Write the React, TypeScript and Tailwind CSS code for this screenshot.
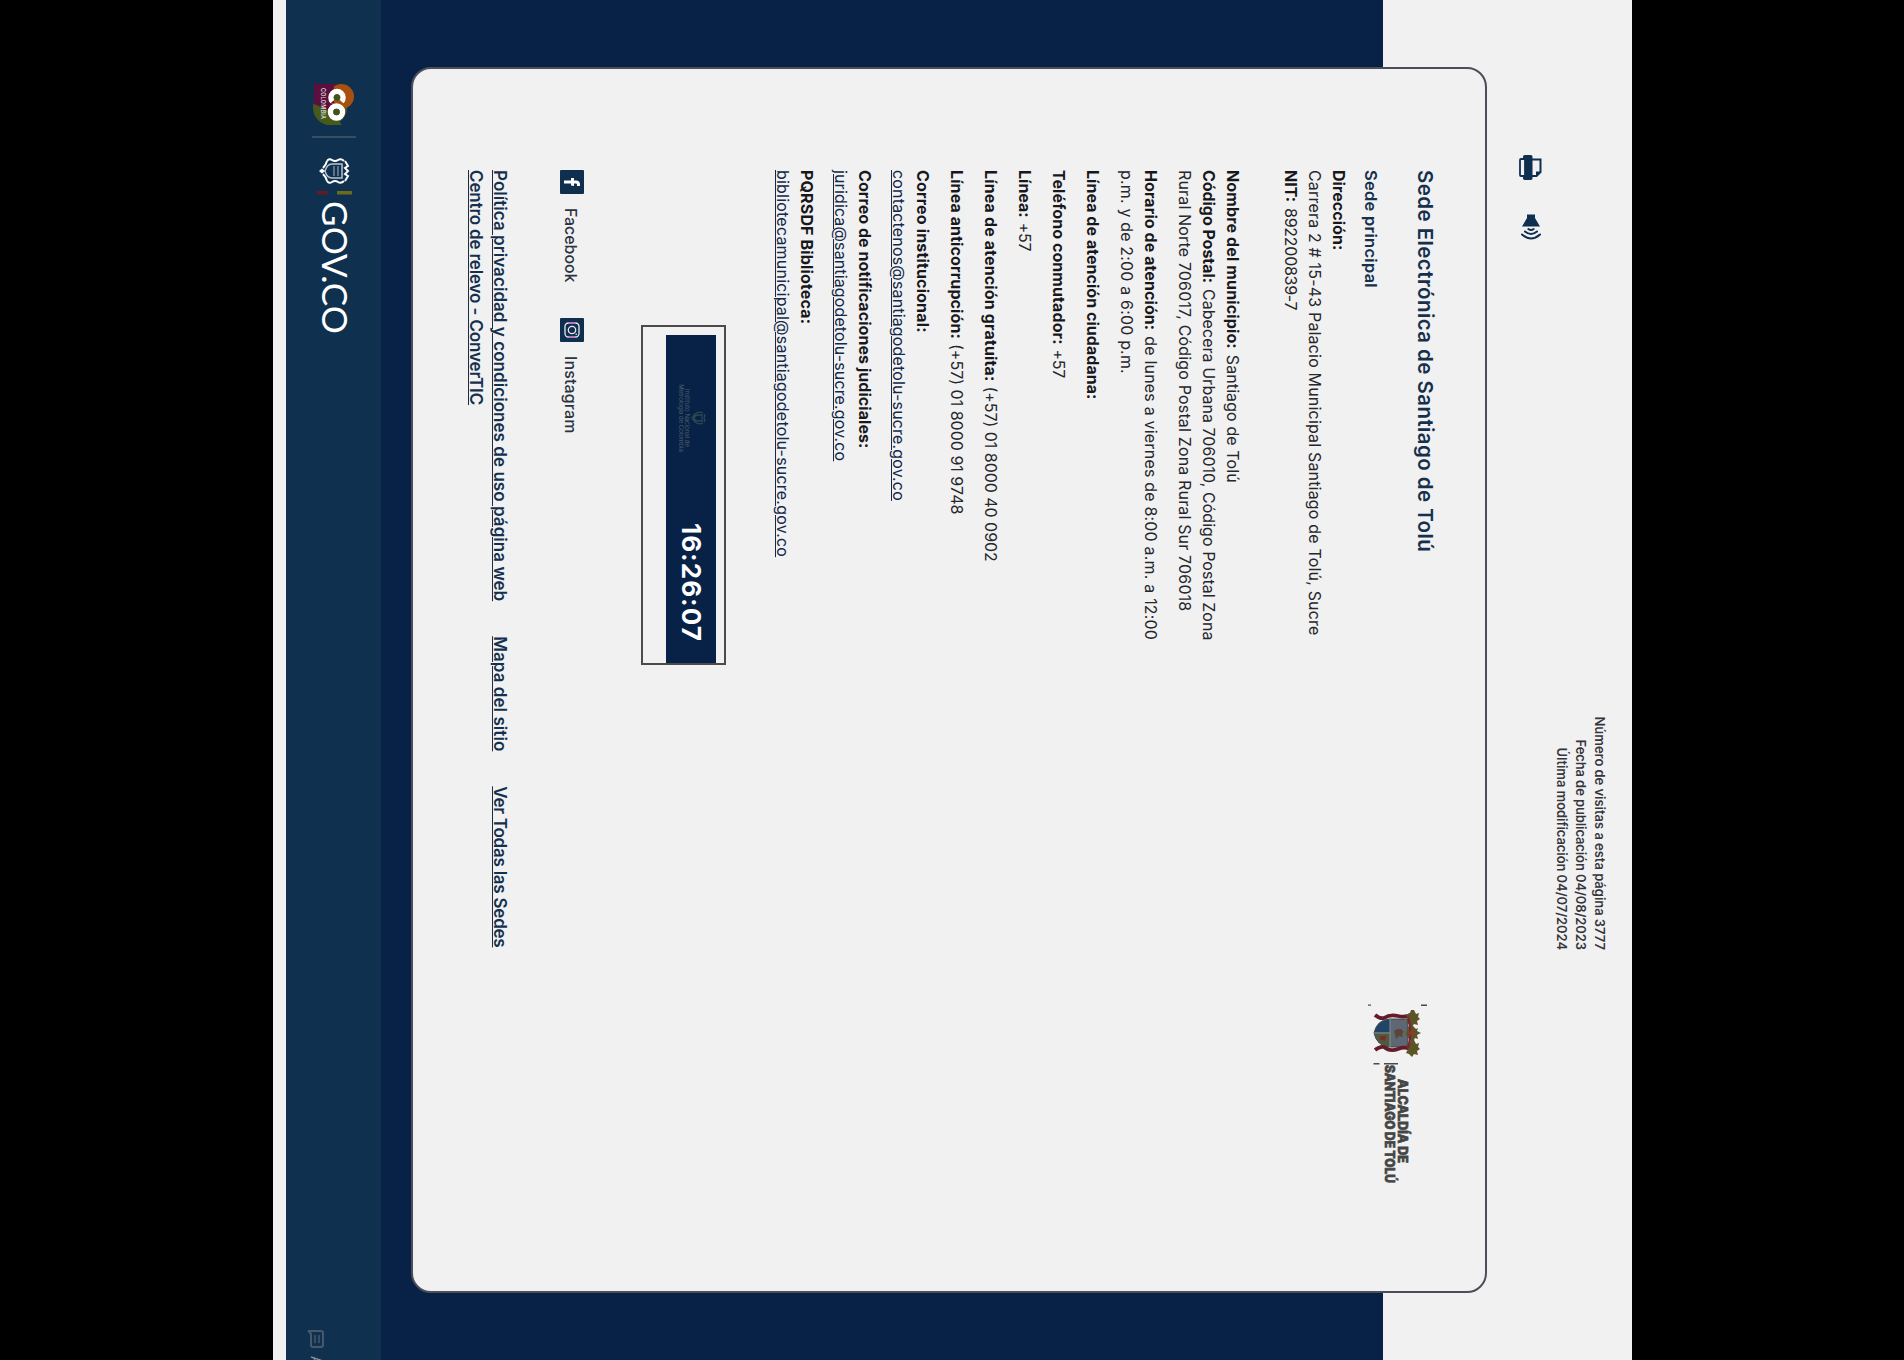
import type { ReactNode } from "react";

function Label({ children, className }: { children: ReactNode; className: string }) {
  return <strong className={`shrink-0 font-bold text-[#18181c] ${className}`}>{children}</strong>;
}

function Value({ children, className }: { children: ReactNode; className: string }) {
  return <span className={`shrink-0 ${className}`}>{children}</span>;
}

function Row({ children, className = "" }: { children: ReactNode; className?: string }) {
  return <div className={`flex h-6 gap-[6px] whitespace-nowrap leading-6 ${className}`}>{children}</div>;
}

function MailLink({ children, className }: { children: string; className: string }) {
  return (
    <a className={`underline decoration-1 underline-offset-1 text-[#14294a] ${className}`}>{children}</a>
  );
}

function PrintIcon() {
  return (
    <svg width="25" height="23" viewBox="0 0 25 23" fill="none" stroke="#0f2f4e" strokeWidth="2">
      <path d="M4.500 11V1.500h12.500l4 4V11" />
      <path d="M16.500 1v5h5z" fill="#0f2f4e" stroke="none" />
      <rect x="0" y="9.500" width="25" height="9.500" rx="1.800" fill="#0f2f4e" stroke="none" />
      <path d="M4 17h17v4q0 1-1 1H5q-1 0-1-1z" fill="#f1f1f1" strokeWidth="1.800" />
    </svg>
  );
}

function SpeakerIcon() {
  return (
    <svg width="26" height="22" viewBox="0 0 26 22" fill="none" stroke="#0f2f4e" strokeWidth="2" strokeLinecap="round">
      <path d="M0.500 7h3.500L12.500 2v18L4 15H.5z" fill="#0f2f4e" stroke="none" />
      <path d="M15 8.300q2 2.700 0 5.400" />
      <path d="M17.500 5q5 6 0 12" />
      <path d="M20.500 2q8 9 0 18" />
    </svg>
  );
}

function TownCrest() {
  return (
    <svg width="188" height="60" viewBox="0 0 188 60" className="block">
      <g fill="#4a4a4a">
        <rect x="0.500" y="0" width="1.500" height="6" />
        <rect x="0.500" y="56" width="1.200" height="3" />
        <rect x="59" y="29" width="1.500" height="14" />
        <rect x="59" y="47.500" width="1.500" height="6" />
      </g>
      <path d="M15 19h28v19q-1 12-14 15q-13-3-14-15z" fill="#5f6674" stroke="#3f4650" strokeWidth="1" />
      <path d="M15.500 37h13v15.500q-12-3-13-15.500z" fill="#1f4568" />
      <path d="M29 37h13.500q-1 12-13.500 15.500z" fill="#4f5b3c" />
      <path d="M15 37h28M29 37v16" stroke="#8b9189" strokeWidth="1" />
      <path d="M25 26l3-3 2 2 3-1-1 4 3 3-5 1-3 1-2-3z" fill="#5a4636" />
      <path d="M32 41l5 1-2 6-3-2z" fill="#7a2c2a" />
      <g fill="none" stroke="#641c28" strokeWidth="3.800">
        <path d="M10 15q4 6 2 14t2 14q1 4-3 9" />
        <path d="M46 15q-4 6-1 14t-2 14q-1 4 3 9" />
      </g>
      <g fill="#5b5427">
        <path d="M6 13l4-2-1-3 4 1 2-2 2 3 4-1-1 4 3 2-3 3-1 3-4-2-4 2-2-4-3-1z" />
        <path d="M22 14l3-3-1-2 3 1 2-4 2 4 4-1-1 3 4 2-3 4-4 3-6-1-3-2z" />
        <path d="M36 13l4-2-1-3 4 1 2-2 2 3 4-1-1 4 3 2-3 3-1 3-4-2-4 2-2-4-3-1z" />
      </g>
      <path d="M13 19q16-5 31 0" fill="none" stroke="#7d2230" strokeWidth="2" />
      <circle cx="29" cy="15" r="2.500" fill="#96342f" />
      <g fill="#444" stroke="#444" strokeWidth="0.700" fontFamily="Inter, sans-serif" fontWeight="800" fontSize="13">
        <text x="75" y="29" textLength="84" lengthAdjust="spacingAndGlyphs">ALCALDÍA DE</text>
        <text x="61" y="42" textLength="118" lengthAdjust="spacingAndGlyphs">SANTIAGO DE TOLÚ</text>
      </g>
    </svg>
  );
}

function GovBrand() {
  return (
    <svg width="112" height="44" viewBox="0 0 112 44" className="block shrink-0">
      <circle cx="24" cy="26" r="17" fill="#465a1c" />
      <path d="M0 13h26v29H0z" fill="#5c0f3c" />
      <path d="M20 42h4q14-1 17-14V14L28 24z" fill="#465a1c" />
      <circle cx="12.500" cy="14.500" r="12.500" fill="#a8500f" />
      <path d="M2 22h17v8H2z" fill="#5c0f3c" />
      <circle cx="28" cy="19.500" r="6" fill="none" stroke="#fff" strokeWidth="5.500" />
      <path d="M17.500 14.500a6 6 0 1 0 0 9" fill="none" stroke="#fff" strokeWidth="5.500" />
      <circle cx="13.500" cy="19" r="3.200" fill="#3f5420" />
      <circle cx="28" cy="19.500" r="3.200" fill="#3f5420" />
      <text x="4" y="35" fontFamily="Inter, sans-serif" fontSize="5.500" fontWeight="600" fill="#dcdcdc" textLength="31">
        COLOMBIA
      </text>
      <rect x="52.500" y="0" width="1" height="44" fill="#5a6b7c" />
      <g fill="none" stroke="#fff" strokeWidth="2">
        <path d="M77 11l5-3 2 3 3-3 3 3 2-3 5 3" />
        <path d="M80 14h14v10q0 5-7 7q-7-2-7-7z" stroke="#b9c5cf" strokeWidth="1.500" />
        <path d="M77 12q-3 3-1 6t0 6 1 5M97 12q3 3 1 6t0 6-1 5" />
        <path d="M77 29q4 1 7 4M97 29q-4 1-7 4" />
        <path d="M82 18h10M82 22h10" stroke="#8fa0b0" strokeWidth="1.200" />
      </g>
      <path d="M87 31l2.500 3-2.500 3-2.500-3z" fill="#fff" />
      <rect x="107" y="4" width="3.500" height="15" fill="#6d6a1c" />
      <rect x="107" y="19" width="3.500" height="9" fill="#0e3157" />
      <rect x="107" y="28" width="3.500" height="11" fill="#611a26" />
    </svg>
  );
}

function ClockWidget() {
  return (
    <div className="ml-[155px] mt-[45px] h-[85px] w-[340px] border-2 border-[#4b4b4b] pl-2 pt-2">
      <div className="flex h-[50px] bg-[#082247]">
        <div className="ml-[39px] mt-[10px] flex w-[88px] flex-col items-center">
          <svg width="16" height="15" viewBox="0 0 16 15" fill="none" stroke="#2c4850" strokeWidth="1.300">
            <path d="M3 3q-2 4 1 8M13 3q2 4-1 8M4 11l4 3 4-3M5 4h6v4q0 3-3 4q-3-1-3-4zM4 2l2-1 2 1 2-1 2 1" />
          </svg>
          <div className="mt-[1px] whitespace-nowrap text-center text-[6px] leading-[6px] text-[#4a5d69]">
            Instituto Nacional de
            <br />
            Metrología de Colombia
          </div>
        </div>
        <div className="ml-[61px] mt-[9px] text-[26px] font-bold leading-8 tracking-[1px] text-white">16:26:07</div>
      </div>
    </div>
  );
}

function FacebookTile() {
  return (
    <svg width="24" height="24" viewBox="0 0 24 24" className="block">
      <rect width="24" height="24" rx="1" fill="#0f2f4e" />
      <path d="M10.500 20v-7H8v-3h2.500V8q0-4 4-4H16v3h-1.300q-1.200 0-1.200 1.300V10H16l-.4 3h-2.100v7z" fill="#fff" />
    </svg>
  );
}

function InstagramTile() {
  return (
    <svg width="24" height="24" viewBox="0 0 24 24" fill="none" stroke="#f1e6f1" strokeWidth="1.300">
      <rect width="24" height="24" rx="1" fill="#0f2f4e" stroke="none" />
      <rect x="5" y="5" width="14" height="14" rx="3.500" />
      <circle cx="12" cy="12" r="3.700" />
      <circle cx="16.200" cy="7.800" r="0.800" fill="#f1e6f1" stroke="none" />
      <path d="M5 8.500v7M19 8.500v7" stroke="#b45fb8" />
    </svg>
  );
}

function FooterLink({ children, className }: { children: string; className: string }) {
  return (
    <a className={`shrink-0 text-[17px] font-semibold text-[#15304d] underline decoration-1 underline-offset-1 ${className}`}>
      {children}
    </a>
  );
}

export default function App() {
  return (
    <div className="h-[1360px] w-[1904px] overflow-hidden bg-black">
      <div className="ml-[1632px] h-[1359px] w-[1360px] origin-top-left rotate-90 overflow-hidden bg-[#f1f1f1] font-['Inter',sans-serif] text-base text-[#26272c]">
        <header className="h-[145px] pt-[23px]">
          <div className="flex h-[57px] flex-col items-end pr-[410px] text-[13px] font-semibold leading-[19px] text-[#35353c]">
            <span className="tracking-[-0.03px]">Número de visitas a esta página 3777</span>
            <span className="tracking-[-0.1px]">Fecha de publicación 04/08/2023</span>
            <span className="tracking-[-0.07px]">Última modificación 04/07/2024</span>
          </div>
          <div className="mt-[10px] flex gap-[34px] pl-[155px]">
            <PrintIcon />
            <SpeakerIcon />
          </div>
        </header>

        <section className="h-[1106px] bg-linear-to-b from-[#f1f1f1] from-[104px] to-[#082247] to-[104px] px-[67px]">
          <div className="flex h-[1076px] w-[1226px] rounded-[20px] border-2 border-[#4b4f5a] bg-[#f1f1f1] pl-[101px]">
            <div className="w-[834px] shrink-0 pt-11">
              <h1 className="h-8 whitespace-nowrap text-[20.5px] font-semibold leading-8 tracking-[0.43px] text-[#15304d]">
                Sede Electrónica de Santiago de Tolú
              </h1>
              <h2 className="mt-[26px] whitespace-nowrap text-[16.5px] font-semibold leading-6 tracking-[0.26px] text-[#15304d]">
                Sede principal
              </h2>

              <Row className="mt-2"><Label className="tracking-[0.05px]">Dirección:</Label></Row>
              <Row><Value className="tracking-[0.18px]">Carrera 2 # 15-43 Palacio Municipal Santiago de Tolú, Sucre</Value></Row>
              <Row>
                <Label className="tracking-normal">NIT:</Label>
                <Value className="tracking-[-0.27px]">892200839-7</Value>
              </Row>

              <Row className="mt-[34px]">
                <Label className="tracking-[0.13px]">Nombre del municipio:</Label>
                <Value className="tracking-[0.1px]">Santiago de Tolú</Value>
              </Row>
              <Row>
                <Label className="tracking-[-0.05px]">Código Postal:</Label>
                <Value className="tracking-[0.04px]">Cabecera Urbana 706010, Código Postal Zona</Value>
              </Row>
              <Row><Value className="tracking-[0.16px]">Rural Norte 706017, Código Postal Zona Rural Sur 706018</Value></Row>

              <Row className="mt-2.5">
                <Label className="tracking-[0.08px]">Horario de atención:</Label>
                <Value className="tracking-[0.19px]">de lunes a viernes de 8:00 a.m. a 12:00</Value>
              </Row>
              <Row><Value className="tracking-[0.17px]">p.m. y de 2:00 a 6:00 p.m.</Value></Row>

              <Row className="mt-2.5"><Label className="tracking-[0.04px]">Línea de atención ciudadana:</Label></Row>
              <Row className="mt-2.5 !gap-[5px]">
                <Label className="tracking-[0.08px]">Teléfono conmutador:</Label>
                <Value className="tracking-[-0.3px]">+57</Value>
              </Row>
              <Row className="mt-2.5 !gap-[5px]">
                <Label className="tracking-normal">Línea:</Label>
                <Value className="tracking-[-0.3px]">+57</Value>
              </Row>
              <Row className="mt-2.5 !gap-[5px]">
                <Label className="tracking-[0.14px]">Línea de atención gratuita:</Label>
                <Value className="tracking-[-0.04px]">(+57) 01 8000 40 0902</Value>
              </Row>
              <Row className="mt-2.5 !gap-[5px]">
                <Label className="tracking-[0.1px]">Línea anticorrupción:</Label>
                <Value className="tracking-[0.01px]">(+57) 01 8000 91 9748</Value>
              </Row>

              <Row className="mt-2.5"><Label className="tracking-[0.16px]">Correo institucional:</Label></Row>
              <Row><MailLink className="tracking-[0.16px]">contactenos@santiagodetolu-sucre.gov.co</MailLink></Row>
              <Row className="mt-2.5"><Label className="tracking-[0.06px]">Correo de notificaciones judiciales:</Label></Row>
              <Row><MailLink className="tracking-[0.13px]">juridica@santiagodetolu-sucre.gov.co</MailLink></Row>
              <Row className="mt-2.5"><Label className="tracking-[0.15px]">PQRSDF Biblioteca:</Label></Row>
              <Row><MailLink className="tracking-[0.21px]">bibliotecamunicipal@santiagodetolu-sucre.gov.co</MailLink></Row>

              <ClockWidget />

              <div className="mt-[57px] flex h-6 font-medium leading-[26px] text-[#2b3340]">
                <FacebookTile />
                <span className="ml-[14px] w-[110px] tracking-[-0.06px]">Facebook</span>
                <InstagramTile />
                <span className="ml-[14px] tracking-[0.1px]">Instagram</span>
              </div>

              <Row className="mt-12 !gap-[35px]">
                <FooterLink className="tracking-[0.05px]">Política privacidad y condiciones de uso página web</FooterLink>
                <FooterLink className="tracking-[0.06px]">Mapa del sitio</FooterLink>
                <FooterLink className="tracking-[-0.24px]">Ver Todas las Sedes</FooterLink>
              </Row>
              <Row><FooterLink className="tracking-[-0.14px]">Centro de relevo - ConverTIC</FooterLink></Row>
            </div>
            <div className="pt-[58px]">
              <TownCrest />
            </div>
          </div>
        </section>

        <footer className="flex h-[95px] bg-[#10304f] pl-[84px] pt-[25px]">
          <GovBrand />
          <span className="-mt-[2px] ml-[5px] w-[1129px] shrink-0 font-['Lato',sans-serif] text-[35px] leading-[44px] tracking-[0.1px] text-white">
            GOV.CO
          </span>
          <div className="mt-[32px] flex shrink-0 gap-2 text-[#47586a]">
            <svg width="18" height="17" viewBox="0 0 18 17" fill="none" stroke="currentColor" strokeWidth="2" strokeLinejoin="round">
              <path d="M1 15.500V3q0-2 2-2h12q2 0 2 2v8q0 2-2 2H4z" />
              <path d="M5 5h8M5 9h8" strokeWidth="1.500" />
            </svg>
            <span className="text-sm leading-4 text-[#8793a0]">A</span>
          </div>
        </footer>
      </div>
    </div>
  );
}
